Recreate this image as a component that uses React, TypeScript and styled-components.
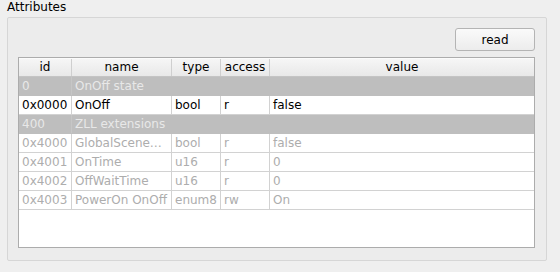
import React from 'react';
import styled, { createGlobalStyle } from 'styled-components';

const GlobalStyle = createGlobalStyle`
  body {
    margin: 0;
    background: #efefef;
    font-family: 'DejaVu Sans', 'Liberation Sans', sans-serif;
    font-size: 12px;
    color: #000;
  }
`;

const Page = styled.div`
  width: 560px;
  height: 272px;
  padding: 0 0 0 7px;
  box-sizing: border-box;
`;

const Title = styled.div`
  height: 17px;
  line-height: 14px;
`;

const GroupBox = styled.div`
  width: 540px;
  height: 244px;
  box-sizing: border-box;
  border: 1px solid #d6d6d6;
  border-radius: 2px;
  background: #ececec;
  padding: 10px 11px 12px 10px;
  display: flex;
  flex-direction: column;
  gap: 6px;
`;

const Toolbar = styled.div`
  display: flex;
  justify-content: flex-end;
`;

const Button = styled.button`
  width: 80px;
  height: 23px;
  border: 1px solid #b4b4b4;
  border-radius: 3px;
  background: linear-gradient(#fafafa, #ececec);
  font-family: inherit;
  font-size: 12px;
  color: #000;
  padding: 0;
`;

const Table = styled.div`
  flex: 1;
  border: 1px solid #acacac;
  background: #fff;
  overflow: hidden;
`;

const COLS = '53px 100px 49px 49px 1fr';

const HeaderRow = styled.div`
  display: grid;
  grid-template-columns: ${COLS};
  height: 19px;
  box-sizing: border-box;
  border-top: 1px solid #fbfbfb;
  border-bottom: 1px solid #c4c4c4;
  background: linear-gradient(#f6f6f6, #e8e8e8);
`;

const HeaderCell = styled.div`
  text-align: center;
  line-height: 17px;
  border-right: 1px solid #cfcfcf;
  &:last-child {
    border-right: none;
  }
`;

const Row = styled.div<{ $kind: 'section' | 'normal' | 'disabled' }>`
  display: grid;
  grid-template-columns: ${COLS};
  height: 19px;
  box-sizing: border-box;
  border-bottom: 1px solid ${(p) => (p.$kind === 'section' ? '#bebebe' : '#d2d2d2')};
  background: ${(p) => (p.$kind === 'section' ? '#bebebe' : '#fff')};
  color: ${(p) => (p.$kind === 'section' ? '#e8e8e8' : p.$kind === 'disabled' ? '#adadad' : '#000')};
`;

const Cell = styled.div<{ $section?: boolean }>`
  padding-left: 3px;
  line-height: 18px;
  white-space: nowrap;
  overflow: hidden;
  border-right: 1px solid ${(p) => (p.$section ? '#c6c6c6' : '#d2d2d2')};
  &:last-child {
    border-right: none;
  }
`;

const SectionName = styled(Cell)`
  grid-column: 2 / -1;
`;

type Attr = { id: string; name: string; type: string; access: string; value: string; disabled?: boolean };
type Item = { section: string; title: string } | Attr;

const items: Item[] = [
  { section: '0', title: 'OnOff state' },
  { id: '0x0000', name: 'OnOff', type: 'bool', access: 'r', value: 'false' },
  { section: '400', title: 'ZLL extensions' },
  { id: '0x4000', name: 'GlobalScene…', type: 'bool', access: 'r', value: 'false', disabled: true },
  { id: '0x4001', name: 'OnTime', type: 'u16', access: 'r', value: '0', disabled: true },
  { id: '0x4002', name: 'OffWaitTime', type: 'u16', access: 'r', value: '0', disabled: true },
  { id: '0x4003', name: 'PowerOn OnOff', type: 'enum8', access: 'rw', value: 'On', disabled: true },
];

const App: React.FC = () => {
  return (
    <Page>
      <GlobalStyle />
      <Title>Attributes</Title>
      <GroupBox>
        <Toolbar>
          <Button type='button'>read</Button>
        </Toolbar>
        <Table>
          <HeaderRow>
            {['id', 'name', 'type', 'access', 'value'].map((h) => (
              <HeaderCell key={h}>{h}</HeaderCell>
            ))}
          </HeaderRow>
          {items.map((it, i) =>
            'section' in it ? (
              <Row key={i} $kind='section'>
                <Cell $section>{it.section}</Cell>
                <SectionName $section>{it.title}</SectionName>
              </Row>
            ) : (
              <Row key={i} $kind={it.disabled ? 'disabled' : 'normal'}>
                <Cell>{it.id}</Cell>
                <Cell>{it.name}</Cell>
                <Cell>{it.type}</Cell>
                <Cell>{it.access}</Cell>
                <Cell>{it.value}</Cell>
              </Row>
            )
          )}
        </Table>
      </GroupBox>
    </Page>
  );
};

export default App;
